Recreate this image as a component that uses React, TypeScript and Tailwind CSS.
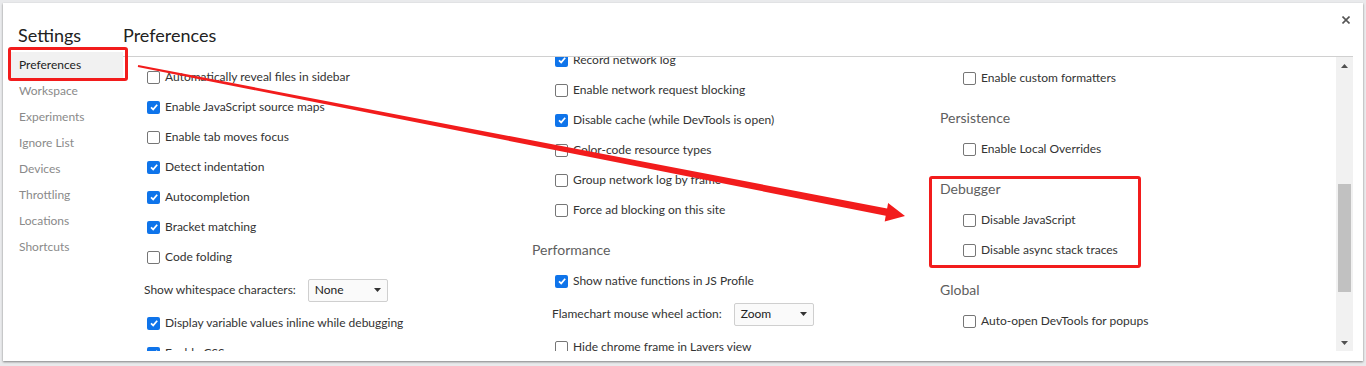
import React from "react";

type Item =
  | { kind: "check"; label: string; checked?: boolean }
  | { kind: "select"; label: string; value: string }
  | { kind: "header"; label: string };

const sidebar = [
  "Preferences",
  "Workspace",
  "Experiments",
  "Ignore List",
  "Devices",
  "Throttling",
  "Locations",
  "Shortcuts",
];

const columns: { offset: string; items: Item[] }[] = [
  {
    offset: "mt-[5px]",
    items: [
      { kind: "check", label: "Automatically reveal files in sidebar" },
      { kind: "check", label: "Enable JavaScript source maps", checked: true },
      { kind: "check", label: "Enable tab moves focus" },
      { kind: "check", label: "Detect indentation", checked: true },
      { kind: "check", label: "Autocompletion", checked: true },
      { kind: "check", label: "Bracket matching", checked: true },
      { kind: "check", label: "Code folding" },
      { kind: "select", label: "Show whitespace characters:", value: "None" },
      { kind: "check", label: "Display variable values inline while debugging", checked: true },
      { kind: "check", label: "Enable CSS source maps", checked: true },
    ],
  },
  {
    offset: "-mt-[12px]",
    items: [
      { kind: "check", label: "Record network log", checked: true },
      { kind: "check", label: "Enable network request blocking" },
      { kind: "check", label: "Disable cache (while DevTools is open)", checked: true },
      { kind: "check", label: "Color-code resource types" },
      { kind: "check", label: "Group network log by frame" },
      { kind: "check", label: "Force ad blocking on this site" },
      { kind: "header", label: "Performance" },
      { kind: "check", label: "Show native functions in JS Profile", checked: true },
      { kind: "select", label: "Flamechart mouse wheel action:", value: "Zoom" },
      { kind: "check", label: "Hide chrome frame in Layers view" },
    ],
  },
  {
    offset: "mt-[6px]",
    items: [
      { kind: "check", label: "Enable custom formatters" },
      { kind: "header", label: "Persistence" },
      { kind: "check", label: "Enable Local Overrides" },
      { kind: "header", label: "Debugger" },
      { kind: "check", label: "Disable JavaScript" },
      { kind: "check", label: "Disable async stack traces" },
      { kind: "header", label: "Global" },
      { kind: "check", label: "Auto-open DevTools for popups" },
    ],
  },
];

function Checkbox({ checked }: { checked?: boolean }) {
  if (checked) {
    return (
      <span className="flex h-[13px] w-[13px] shrink-0 items-center justify-center rounded-[2px] bg-[#0f74ea]">
        <svg viewBox="0 0 10 10" className="h-[10px] w-[10px]">
          <path d="M2 5.3 L4.2 7.4 L8.2 2.8" stroke="white" strokeWidth="1.7" fill="none" />
        </svg>
      </span>
    );
  }
  return <span className="h-[13px] w-[13px] shrink-0 rounded-[2px] border border-[#767676] bg-white" />;
}

function Row({ item }: { item: Item }) {
  if (item.kind === "header") {
    return (
      <div className="mt-[11px] flex h-[30px] items-center pb-[4px] text-[14px] text-[#5e5e5e]">{item.label}</div>
    );
  }
  if (item.kind === "select") {
    return (
      <div className="flex h-[36px] items-center pl-[20px] text-[12px] text-[#333]">
        <span>{item.label}</span>
        <div className="ml-[12px] flex h-[23px] w-[80px] items-center justify-between rounded-[2px] border border-[#cfcfcf] bg-[#fafafa] pl-[6px] pr-[6px]">
          <span className="text-[#222]">{item.value}</span>
          <svg viewBox="0 0 7 4" className="h-[4px] w-[7px]">
            <path d="M0 0 H7 L3.5 4 Z" fill="#333" />
          </svg>
        </div>
      </div>
    );
  }
  return (
    <div className="flex h-[30px] items-center gap-[5px] whitespace-nowrap pl-[23px] text-[12px] text-[#333]">
      <Checkbox checked={item.checked} />
      <span>{item.label}</span>
    </div>
  );
}

export default function App() {
  return (
    <div className="relative h-[366px] w-[1366px] overflow-hidden bg-[#e9eaec] p-[3px] font-['Lato','Noto_Sans',sans-serif]">
      <div className="flex h-[358px] w-[1360px] bg-white shadow-[0_1px_2px_rgba(0,0,0,0.45)]">
        <div className="w-[120px] shrink-0">
          <div className="flex h-[49px] items-end pb-[5px] pl-[15px] text-[18px] leading-[24px] text-[#222]">
            Settings
          </div>
          <div className="flex flex-col">
            {sidebar.map((s, i) => (
              <div
                key={s}
                className={
                  i === 0
                    ? "ml-[8px] h-[26px] bg-[#f1f1f1] pl-[8px] text-[12px] leading-[26px] text-[#222]"
                    : "ml-[8px] h-[26px] pl-[8px] text-[12px] leading-[26px] text-[#8a8a8a]"
                }
              >
                {s}
              </div>
            ))}
          </div>
        </div>

        <div className="flex min-w-0 flex-1 flex-col pr-[10px]">
          <div className="flex h-[54px] justify-between border-b border-[#d0d0d0]">
            <div className="self-end pb-[9px] text-[18px] leading-[24px] text-[#222]">Preferences</div>
            <svg viewBox="0 0 8 8" className="mr-[3px] mt-[13px] h-[8px] w-[8px]">
              <path d="M0.5 0.5 L7.5 7.5 M7.5 0.5 L0.5 7.5" stroke="#555" strokeWidth="1.6" />
            </svg>
          </div>
          <div className="flex h-[294px]">
            <div className="grid min-w-0 flex-1 grid-cols-[408px_408px_1fr] overflow-hidden pl-[1px]">
              {columns.map((c, i) => (
                <div key={i} className={c.offset}>
                  {c.items.map((it) => (
                    <Row key={it.label} item={it} />
                  ))}
                </div>
              ))}
            </div>
            <div className="flex w-[17px] flex-col bg-[#f1f1f1]">
              <div className="flex h-[17px] items-center justify-center">
                <svg viewBox="0 0 7 4" className="h-[4px] w-[7px]">
                  <path d="M0 4 H7 L3.5 0 Z" fill="#505050" />
                </svg>
              </div>
              <div className="flex-1">
                <div className="mx-[2px] mt-[110px] h-[108px] bg-[#c1c1c1]" />
              </div>
              <div className="flex h-[17px] items-center justify-center">
                <svg viewBox="0 0 7 4" className="h-[4px] w-[7px]">
                  <path d="M0 0 H7 L3.5 4 Z" fill="#505050" />
                </svg>
              </div>
            </div>
          </div>
        </div>
      </div>

      {/* annotations */}
      <div className="pointer-events-none absolute left-[8px] top-[47px] h-[34px] w-[120px] rounded-[3px] border-[3px] border-[#f21c1c]" />
      <div className="pointer-events-none absolute left-[929px] top-[176px] h-[92px] w-[212px] rounded-[3px] border-[3px] border-[#f21c1c]" />
      <svg className="pointer-events-none absolute left-0 top-0" width="1366" height="366">
        <polygon
          points="137.8,67 885.7,215.8 884.7,221.5 905,216 888.1,203 887.1,208.4 138.2,65"
          fill="#f21c1c"
        />
      </svg>
    </div>
  );
}
